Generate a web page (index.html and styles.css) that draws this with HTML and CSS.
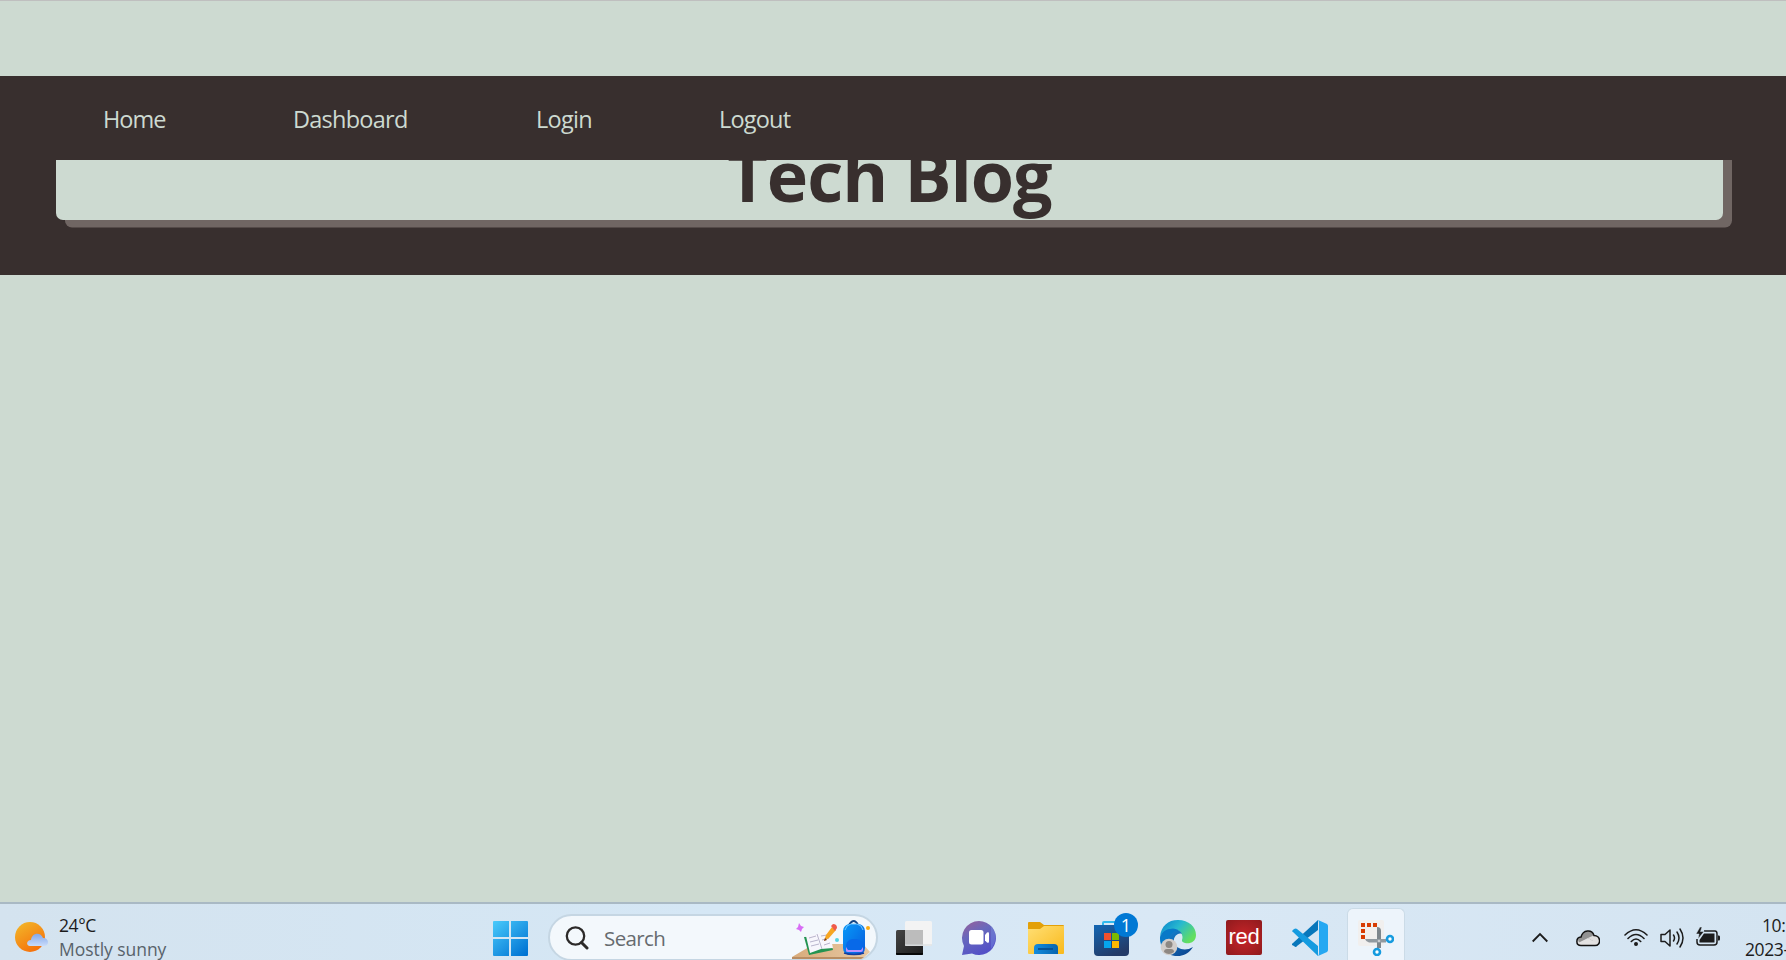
FILE: index.html
```html
<!DOCTYPE html>
<html lang="en">
<head>
<meta charset="utf-8">
<title>Tech Blog</title>
<link rel="stylesheet" href="styles.css">
</head>
<body>
<nav class="nav">
  <a class="home">Home</a><a class="dashboard">Dashboard</a><a class="login">Login</a><a class="logout">Logout</a>
</nav>
<header class="banner"><div class="card"><h1>Tech Blog</h1></div></header>
<main class="content"></main>
<footer class="taskbar">
  <section class="weather">
    <svg width="36" height="36" viewBox="0 0 36 36">
      <defs><linearGradient id="sun" x1="0" y1="0" x2=".6" y2="1"><stop stop-color="#f2bb2b"/><stop offset="1" stop-color="#f6720c"/></linearGradient>
      <linearGradient id="cloud" x1="0" y1="0" x2="0" y2="1"><stop stop-color="#83a7ea"/><stop offset="1" stop-color="#c9dcfa"/></linearGradient></defs>
      <circle cx="15" cy="17" r="15" fill="url(#sun)"/>
      <path d="M15 26C11 26 11 20 16 20C17 12 26 12 28 18C34 17.500 35 26 29 26Z" fill="url(#cloud)"/>
    </svg>
    <div class="weather-text"><span class="temp">24°C</span><span class="sky">Mostly sunny</span></div>
  </section>
  <section class="center">
    <svg class="start" width="36" height="36" viewBox="0 0 36 36">
      <defs><linearGradient id="win" gradientUnits="userSpaceOnUse" x1="0" y1="0" x2="32" y2="36"><stop stop-color="#4ccdfc"/><stop offset="1" stop-color="#0073d3"/></linearGradient></defs>
      <path d="M2 1H17V17H1V2Q1 1 2 1ZM19 1H35Q36 1 36 2V17H19ZM1 19H17V36H2Q1 36 1 35ZM19 19H36V35Q36 36 35 36H19Z" fill="url(#win)"/>
    </svg>
    <div class="search">
      <svg width="24" height="24" viewBox="0 0 24 24" fill="none" stroke="#2c2a29" stroke-width="2.300"><circle cx="10.500" cy="10" r="8.700"/><path d="M16.500 16.500L22 22" stroke-width="3" stroke-linecap="round"/></svg>
      <span>Search</span>
      <svg class="art" width="82" height="40" viewBox="0 0 82 40">
        <defs><linearGradient id="bag" x1="0" y1="0" x2="1" y2="1"><stop stop-color="#0799f8"/><stop offset="1" stop-color="#075bdd"/></linearGradient>
        <linearGradient id="desk"><stop stop-color="#d8ab7b"/><stop offset="1" stop-color="#e8c9a4"/></linearGradient></defs>
        <path d="M0 37L22 24H71L78 32L70 39H0Z" fill="url(#desk)"/><path d="M0 37H72L69 39H0Z" fill="#b98d62"/>
        <path d="M12 17L17 35L41 30L37 16Z" fill="#239451"/><path d="M14 16L25 14L37 10L41 28L29 29L18 33Z" fill="#f7f6fc"/>
        <path d="M25 14L30 29M17 18L24 16M18 22L26 20M19 26L27 24M29 16L35 15M30 20L37 18M32 25L38 23" stroke="#b9b5cc" fill="none"/>
        <path d="M32 21L34 15L40 7L44 10L37 18Z" fill="#f7a623"/><path d="M39 6L41 4Q45 4 45 8L43 11Z" fill="#ef5b4c"/><path d="M32 21L33 18L35 20Z" fill="#773d25"/>
        <path d="M7 3L9 6L12 7L10 9L9 12L7 10L4 9L6 7Z" fill="#d86df5"/><circle cx="45" cy="20" r="2" fill="#55d2e2"/><circle cx="76" cy="8" r="2" fill="#faac13"/>
        <path d="M57 5Q62-3 66 5" fill="none" stroke="#134584" stroke-width="2"/>
        <rect x="51" y="4" width="22" height="31" rx="7" fill="url(#bag)"/><path d="M53 10Q54 5 59 4H65Q70 5 71 10" fill="none" stroke="#70c7ff"/>
        <rect x="54" y="19" width="17" height="13" rx="7" fill="#0869e8"/><path d="M54 27V31Q54 32 56 32H69Q71 32 71 30V27L69 30H56Z" fill="#b991ff"/>
        <path d="M52 33Q62 36 72 33" fill="none" stroke="#163c9e" stroke-width="1.500"/>
      </svg>
    </div>
    <div class="apps">
      <div class="app"><svg width="36" height="36" viewBox="0 0 36 36">
        <defs><linearGradient id="dark" x1="0" y1="0" x2="1" y2="1"><stop stop-color="#444"/><stop offset="1" stop-color="#1c1c1c"/></linearGradient></defs>
        <rect x="0" y="10" width="27" height="25" rx="1.500" fill="url(#dark)"/><path d="M0 33H27V34Q27 35 26 35H1Q0 35 0 34Z" fill="#080808"/><rect x="9" y="1" width="27" height="25" rx="1.500" fill="#f3f3f3"/><path d="M9 10H27V25.500H10Q9 25.500 9 24Z" fill="#bcbcbc"/><path d="M9 25H36" stroke="#d5dadd"/></svg></div>
      <div class="app"><svg width="36" height="36" viewBox="1 0 36 36">
        <defs><linearGradient id="chat" x1="0" y1="0" x2=".5" y2="1"><stop stop-color="#9c6098"/><stop offset=".45" stop-color="#6768bd"/><stop offset="1" stop-color="#5350c7"/></linearGradient></defs>
        <path d="M18 1A17 17 0 1 1 11 33.500L1 35L3 26A17 17 0 0 1 18 1Z" fill="url(#chat)"/><path d="M30 6Q39 17 30 29Z" fill="#7f9ae7" opacity=".35"/><rect x="8" y="10" width="14.500" height="14.500" rx="2.500" fill="#fff"/><path d="M24 15L26 12.500Q28 11.500 28 13.500V21.500Q28 23.500 26 22.500L24 20.500Z" fill="#fff"/></svg></div>
      <div class="app"><svg width="36" height="36" viewBox="0 0 36 36">
        <defs><linearGradient id="fold" x1="0" y1="0" x2="1" y2="1"><stop stop-color="#ffdf75"/><stop offset="1" stop-color="#f9b91b"/></linearGradient><linearGradient id="fblue"><stop stop-color="#128ce0"/><stop offset="1" stop-color="#0764ae"/></linearGradient></defs>
        <path d="M0 3Q0 2 1 2H12L16 5H35Q36 5 36 6V15H0Z" fill="#e3a008"/><path d="M0 9H12L16 6H36V33Q36 34 35 34H1Q0 34 0 33Z" fill="url(#fold)"/><path d="M6 34V28Q6 24 10 24H26Q30 24 30 28V34Z" fill="url(#fblue)"/><path d="M10 29H25" stroke="#064e91" stroke-width="1.800"/></svg></div>
      <div class="app store"><svg width="36" height="36" viewBox="0 0 36 36">
        <defs><linearGradient id="store" x1="0" y1="0" x2=".5" y2="1"><stop stop-color="#1266b3"/><stop offset="1" stop-color="#243b68"/></linearGradient></defs>
        <path d="M9 6V3Q9 2 10 2H25V6" fill="none" stroke="#30b9ed" stroke-width="2"/><path d="M0 5H35V32Q35 36 31 36H4Q0 36 0 32Z" fill="url(#store)"/><path d="M10 13H17V20H10Z" fill="#f2502d"/><path d="M18 13H25V20H18Z" fill="#7cb900"/><path d="M10 21H17V28H10Z" fill="#05a5ed"/><path d="M18 21H25V28H18Z" fill="#fcb800"/></svg><b>1</b></div>
      <div class="app"><svg width="36" height="36" viewBox="0 0 36 36">
        <defs><linearGradient id="edge" x1="0" y1="0" x2="1" y2=".6"><stop stop-color="#0880ce"/><stop offset=".5" stop-color="#28b9cf"/><stop offset="1" stop-color="#63df5e"/></linearGradient><linearGradient id="edge2" x1="0" y1="0" x2="1" y2="1"><stop stop-color="#168fdc"/><stop offset="1" stop-color="#0b3d88"/></linearGradient></defs>
        <path d="M0 17C1 6 8 0 18 0C29 0 36 7 36 15C36 22 30 24 25 23C21 22 22 20 22.500 18C23 13 18 9 13 9C7 9 2 12 0 17Z" fill="url(#edge)"/>
        <path d="M0 18C2 7 18 6 22 14C17 12 13 18 14 22C16 29 25 32 33 27C29 34 21 37 15 36C6 35 0 28 0 18Z" fill="url(#edge2)"/>
        <path d="M0 18C2 9 12 7 18 10C9 12 7 20 11 30Q1 29 0 18Z" fill="#0879c8"/>
        <circle cx="9" cy="27" r="8.300" fill="#d1cdca"/><circle cx="9" cy="24.500" r="3.500" fill="#8d8883"/><path d="M4 32Q4 29 7 29H11Q14 29 14 32Q9 36 4 32Z" fill="#8d8883"/></svg></div>
      <div class="app"><div class="red"><span>red</span></div></div>
      <div class="app"><svg width="36" height="36" viewBox="0 0 36 36">
        <path d="M1 23L26 0V10L5 26Q4 28 2 26L0 25Q-.5 24 1 23Z" fill="#0877bb"/><path d="M1 12L26 36V26L5 9Q4 8 2 9L0 11Q-.5 11 1 12Z" fill="#149be0"/><path d="M26 0L35 4Q36 5 36 6V30Q36 31 35 32L26 36Q27 35 27 33V3Q27 1 26 0Z" fill="#25a8f2"/></svg></div>
      <div class="app active"><svg width="36" height="36" viewBox="0 0 36 36">
        <rect x="0" y="0" width="26" height="26" rx="2" fill="#f1efee"/><path d="M3 3H7V7H3ZM9 3H13V7H9ZM15 3H19V7H15ZM3 9H7V13H3ZM3 15H7V19H3Z" fill="#d83b01"/>
        <path d="M19 7Q23 7 23 11V28H19Z" fill="#7e868c"/><path d="M7 19H28V22.500H11Q8 22 7 19Z" fill="#929aa0"/><circle cx="21" cy="21" r="1.300" fill="#c9cdd0"/><circle cx="32" cy="19" r="3" fill="#fff" stroke="#169bdf" stroke-width="2.600"/><circle cx="19" cy="32" r="3" fill="#fff" stroke="#169bdf" stroke-width="2.600"/></svg></div>
    </div>
  </section>
  <section class="tray">
    <svg class="chev" width="16" height="24" viewBox="0 0 16 24" fill="none" stroke="#1c1c1c" stroke-width="1.800"><path d="M.7 15.500L8 8L15.300 15.500"/></svg>
    <svg class="onedrive" width="24" height="24" viewBox="0 0 24 24"><path d="M5 19.500C-.5 19.500-.5 11.500 5 11C7 3.500 16 3 18 9.500C25 9.500 25.500 19.500 19 19.500Z" fill="#e0dfdf"/><path d="M2 14C3 11 5 11 6 10C8 4 16 4 17.500 9.500L12 12L17 15L4 19Z" fill="#929292"/><path d="M12 12L22 18L19 19.500H5L2 17Z" fill="#e3e2e2"/><path d="M5 19.500C-.5 19.500-.5 11.500 5 11C7 3.500 16 3 18 9.500C25 9.500 25.500 19.500 19 19.500Z" fill="none" stroke="#111" stroke-width="1.500"/></svg>
    <svg class="wifi" width="24" height="24" viewBox="0 0 24 24" fill="none" stroke="#1c1c1c" stroke-width="1.600" stroke-linecap="round"><path d="M1 9Q12-1.500 23 9M4 12.500Q12 4.500 20 12.500M7.300 15.500Q12 10.500 16.700 15.500"/><circle cx="12" cy="18" r="1.200" fill="#1c1c1c"/></svg>
    <svg class="sound" width="24" height="24" viewBox="0 0 24 24" fill="none" stroke="#1c1c1c" stroke-width="1.500" stroke-linejoin="round" stroke-linecap="round"><path d="M1 8.500H5L10 4V20L5 15.500H1ZM13.500 9Q15.500 12 13.500 15M17 6Q21 12 17 18M20 3Q26 12 20 21"/></svg>
    <svg class="battery" width="24" height="24" viewBox="0 0 24 24"><path d="M8 5H19Q21 5 21 8V16Q21 19 18 19H4Q1 19 1 16V13" fill="none" stroke="#1c1c1c" stroke-width="1.500"/><path d="M8 7.500H18.500V16.500H3.500V14Z" fill="#1c1c1c"/><path d="M22 9.500H23Q24 9.500 24 11V13Q24 14.500 23 14.500H22Z" fill="#1c1c1c"/><path d="M4 1L0 8H3L2 13L8 5.500H4.500L6 1Z" fill="#1c1c1c" stroke="#d5e4f0" stroke-width=".5"/></svg>
    <div class="clock"><span class="time">10:</span><span>2023-</span></div>
  </section>
</footer>
</body>
</html>
```
FILE: styles.css
```css
* { box-sizing: border-box; }
body {
  margin: 0;
  width: 1786px;
  height: 960px;
  overflow: hidden;
  display: flex;
  flex-direction: column;
  padding-top: 75px;
  border-top: 1px solid #bfbfbf;
  background: #cddad1;
  color: #382f2e;
  font-family: "Open Sans", "Noto Sans", sans-serif;
}
svg { display: block; flex: none; }
.nav {
  height: 84px;
  flex: none;
  display: flex;
  gap: 127px;
  padding-left: 103px;
  background: #382f2e;
  color: #cddad1;
  font-size: 23.5px;
  font-weight: 500;
  line-height: 86px;
}
.nav a { display: block; white-space: nowrap; }
.home { width: 63px; letter-spacing: -1px; }
.dashboard { width: 116px; letter-spacing: -.75px; }
.login { width: 56px; letter-spacing: -.7px; }
.logout { letter-spacing: -.8px; }
.banner { flex: none; height: 115px; padding: 0 63px 0 56px; background: #382f2e; overflow: hidden; }
.card {
  height: 60px;
  border-radius: 0 0 7px 7px;
  background: #cddad1;
  box-shadow: 9px 7.500px 0 #706663, 9px 0 0 #706663;
  clip-path: inset(0 -20px -20px 0);
}
h1 {
  margin: 0;
  transform: translateY(-35px);
  text-align: center;
  font-size: 70px;
  line-height: 100px;
  font-weight: 700;
  letter-spacing: -1px;
}
.content { flex: 1; }
.taskbar {
  height: 58px;
  flex: none;
  display: flex;
  border-top: 2px solid #a9b9c4;
  background: linear-gradient(90deg, #d4e3ef, #d5e7f5 40%, #d9e8f5 65%, #d4e4f1);
  color: #1c1c1c;
  overflow: hidden;
}
.weather { width: 492px; flex: none; display: flex; padding-left: 15px; }
.weather > svg { margin-top: 16px; }
.weather-text { margin: 9px 0 0 8px; display: flex; flex-direction: column; font-size: 17.5px; line-height: 24px; white-space: nowrap; }
.temp { letter-spacing: -.4px; }
.sky { color: #58626a; letter-spacing: -.05px; }
.center { width: 917px; flex: none; display: flex; }
.start { margin-top: 16px; }
.search {
  width: 330px;
  height: 47px;
  flex: none;
  margin: 10px 0 0 20px;
  padding: 0 0 0 15px;
  border: 2px solid #c5d6e3;
  border-radius: 24px;
  background: #f3f8fc;
  display: flex;
  color: #666b6f;
  font-size: 20.5px;
  line-height: 44px;
}
.search > svg:first-child { margin-top: 10px; }
.search span { margin-left: 15px; width: 188px; letter-spacing: -.6px; }
.search .art { margin-top: 4px; }
.apps { display: flex; margin-left: 3px; }
.app { width: 66px; height: 56px; flex: none; padding: 16px 15px 0; }
.store { position: relative; }
.store b { position: absolute; left: 35px; top: 9px; width: 24px; height: 24px; border-radius: 50%; background: #0078d4; color: #fff; font-size: 18px; line-height: 24px; text-align: center; font-weight: 400; }
.red { width: 36px; height: 35px; border-radius: 2px; background: radial-gradient(#c92529, #8e1a1d); color: #fff; font: 22px/33px "Liberation Sans", sans-serif; letter-spacing: -.2px; text-align: center; }
.active { width: 58px; height: 56px; margin: 4px 0 0 4px; padding: 11px 10px 0; border: 1px solid #cbdbe7; border-bottom: 0; border-radius: 6px 6px 0 0; background: #edf4fb; }
.tray { display: flex; padding-left: 123px; flex: none; }
.tray > svg { margin-top: 22px; }
.onedrive { margin-left: 28px; }
.wifi { margin-left: 24px; }
.sound { margin-left: 12px; }
.battery { margin-left: 12px; }
.clock { margin: 9px 0 0 25px; display: flex; flex-direction: column; font-size: 17.5px; line-height: 24px; letter-spacing: -.4px; white-space: nowrap; }
.time { padding-left: 17px; }
```
